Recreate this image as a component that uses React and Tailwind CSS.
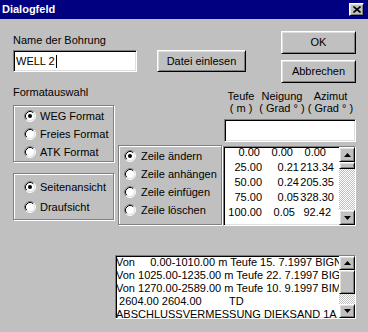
const raised =
  'border border-t-white border-l-white border-r-black border-b-black shadow-[inset_1px_1px_0_#dfdfdf,inset_-1px_-1px_0_#808080]'
const sunken =
  'border border-t-[#808080] border-l-[#808080] border-r-white border-b-white shadow-[inset_1px_1px_0_#000,inset_-1px_-1px_0_#dfdfdf]'
const etched = 'border border-[#808080] shadow-[inset_1px_1px_0_#fff,1px_1px_0_#fff]'
const dither =
  'bg-[image:repeating-conic-gradient(#c0c0c0_0%_25%,#ffffff_0%_50%)] bg-[length:2px_2px]'

const dataRows = [
  [['0.00', 'pr-[2px]'], ['0.00', 'pr-[6px]'], ['0.00', 'pr-[8px]']],
  [['25.00', ''], ['0.21', ''], ['213.34', '']],
  [['50.00', ''], ['0.24', ''], ['205.35', '']],
  [['75.00', ''], ['0.05', ''], ['328.30', '']],
  [['100.00', '-mr-[3px]'], ['0.05', 'pr-[1px]'], ['92.42', '']],
]

const logRows = [
  'Von     0.00-1010.00 m Teufe 15. 7.1997 BIGNAL',
  'Von 1025.00-1235.00 m Teufe 22. 7.1997 BIGNAL',
  'Von 1270.00-2589.00 m Teufe 10. 9.1997 BIMESS',
  ' 2604.00 2604.00         TD',
  'ABSCHLUSSVERMESSUNG DIEKSAND 1A (1997)',
]

function Radio({ checked }) {
  return (
    <svg width="12" height="12" viewBox="0 0 12 12" className="shrink-0">
      <circle cx="6" cy="6" r="5" fill="#fff" />
      <path d="M2.11 9.89A5.5 5.5 0 0 1 9.89 2.11" fill="none" stroke="#808080" />
      <path d="M9.89 2.11A5.5 5.5 0 0 1 2.11 9.89" fill="none" stroke="#fff" />
      <path d="M2.82 9.18A4.5 4.5 0 0 1 9.18 2.82" fill="none" stroke="#000" />
      <path d="M9.18 2.82A4.5 4.5 0 0 1 2.82 9.18" fill="none" stroke="#dfdfdf" />
      {checked && <circle cx="6" cy="6" r="2" fill="#000" />}
    </svg>
  )
}

function Option({ label, checked, rowClass, gapClass }) {
  return (
    <div className={`flex items-center ${rowClass} ${gapClass}`}>
      <Radio checked={checked} />
      <span>{label}</span>
    </div>
  )
}

function ScrollBtn({ down, h }) {
  return (
    <div className={`${raised} bg-[#c0c0c0] flex items-center justify-center ${h}`}>
      <svg width="7" height="4" viewBox="0 0 7 4">
        <path d={down ? 'M0 0h7L3.5 4z' : 'M0 4h7L3.5 0z'} fill="#000" />
      </svg>
    </div>
  )
}

export default function App() {
  return (
    <div className="w-[368px] h-[332px] bg-[#c0c0c0] overflow-hidden font-['Liberation_Sans',Arial,sans-serif] text-[11px] leading-[13px] text-black">
      {/* Title bar */}
      <div className="h-[19px] bg-[#000080] flex items-center justify-between pl-[2px] pr-[4px]">
        <span className="text-white font-bold">Dialogfeld</span>
        <div className={`w-[15px] h-[13px] ${raised} bg-[#c0c0c0] flex items-center justify-center`}>
          <svg width="8" height="7" viewBox="0 0 8 7">
            <path d="M0.5 0.5l7 6M7.5 0.5l-7 6" stroke="#000" strokeWidth="1.6" />
          </svg>
        </div>
      </div>

      {/* Name + buttons */}
      <div className="flex items-start pl-[13px] pr-[12px]">
        <div className="mt-[15px]">
          <div>Name der Bohrung</div>
          <div className="flex mt-[3px] gap-[20px]">
            <div className={`w-[124px] h-[22px] bg-white ${sunken} pl-[2px] flex items-center`}>
              <span>WELL 2</span>
              <span className="w-px h-[13px] bg-black ml-px" />
            </div>
            <button className={`w-[89px] h-[22px] ${raised}`}>Datei einlesen</button>
          </div>
        </div>
        <div className="ml-auto mt-[12px] flex flex-col gap-[6px]">
          <button className={`w-[75px] h-[23px] ${raised}`}>OK</button>
          <button className={`w-[75px] h-[23px] ${raised}`}>Abbrechen</button>
        </div>
      </div>

      {/* Options + table */}
      <div className="flex items-start pl-[13px]">
        <div className="w-[101px] mt-[3px]">
          <div>Formatauswahl</div>
          <div className={`mt-[6px] h-[57px] ${etched} pt-[1px] pl-[10px]`}>
            <Option label="WEG Format" checked rowClass="h-[18px]" gapClass="gap-[4px]" />
            <Option label="Freies Format" rowClass="h-[18px]" gapClass="gap-[4px]" />
            <Option label="ATK Format" rowClass="h-[18px]" gapClass="gap-[4px]" />
          </div>
          <div className={`mt-[11px] h-[47px] ${etched} pt-[3px] pl-[10px]`}>
            <Option label="Seitenansicht" checked rowClass="h-[20px]" gapClass="gap-[4px]" />
            <Option label="Draufsicht" rowClass="h-[20px]" gapClass="gap-[4px]" />
          </div>
        </div>

        <div className={`ml-[4px] w-[104px] mt-[62px] h-[80px] ${etched} pt-[1px] pl-[5px]`}>
          <Option label="Zeile ändern" checked rowClass="h-[18px]" gapClass="gap-[5px]" />
          <Option label="Zeile anhängen" rowClass="h-[18px]" gapClass="gap-[5px]" />
          <Option label="Zeile einfügen" rowClass="h-[18px]" gapClass="gap-[5px]" />
          <Option label="Zeile löschen" rowClass="h-[18px]" gapClass="gap-[5px]" />
        </div>

        <div className="ml-[1px] w-[133px] mt-[7px]">
          <div className="grid grid-cols-[36px_46px_51px] text-center leading-[12px]">
            <span>Teufe</span>
            <span>Neigung</span>
            <span>Azimut</span>
            <span>( m )</span>
            <span>( Grad ° )</span>
            <span>( Grad ° )</span>
          </div>
          <div className={`mt-[5px] ml-px w-[132px] h-[23px] bg-white ${sunken}`} />
          <div className={`mt-[4px] w-[133px] h-[80px] bg-white ${sunken} flex`}>
            <div className="flex-1 overflow-hidden leading-[11px]">
              {dataRows.map((row, i) => (
                <div key={i} className="flex h-[15px]">
                  <span className={`w-[38px] text-right ${row[0][1]}`}>{row[0][0]}</span>
                  <span className={`w-[37px] text-right ${row[1][1]}`}>{row[1][0]}</span>
                  <span className={`w-[35px] text-right ${row[2][1]}`}>{row[2][0]}</span>
                </div>
              ))}
            </div>
            <div className="w-[16px] flex flex-col">
              <ScrollBtn h="h-[15px]" />
              <div className={`h-[7px] ${raised} bg-[#c0c0c0]`} />
              <div className={`flex-1 ${dither}`} />
              <ScrollBtn down h="h-[15px]" />
            </div>
          </div>
        </div>
      </div>

      {/* Log list */}
      <div className={`mt-[29px] ml-[115px] w-[241px] h-[64px] bg-white ${sunken} flex`}>
        <div className="flex-1 overflow-hidden whitespace-pre leading-[13px]">
          {logRows.map((r, i) => (
            <div key={i}>{r}</div>
          ))}
        </div>
        <div className="w-[16px] flex flex-col">
          <ScrollBtn h="h-[14px]" />
          <div className={`h-[24px] ${raised} bg-[#c0c0c0]`} />
          <div className={`flex-1 ${dither}`} />
          <ScrollBtn down h="h-[14px]" />
        </div>
      </div>
    </div>
  )
}
